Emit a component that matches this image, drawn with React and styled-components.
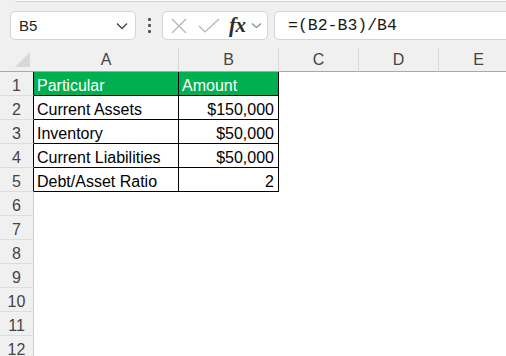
import React from 'react'
import styled, { createGlobalStyle } from 'styled-components';

const GlobalStyle = createGlobalStyle`
    html, body {
        margin: 0;
        padding: 0;
        background: #f0f0f0;
    }
    #root {
        width: 506px;
        height: 356px;
        overflow: hidden;
    }
`;

const columns = ["A", "B", "C", "D", "E"];

const rows = [
    ["Particular", "Amount"],
    ["Current Assets", "$150,000"],
    ["Inventory", "$50,000"],
    ["Current Liabilities", "$50,000"],
    ["Debt/Asset Ratio", "2"],
];

export default function App() {
    return (
        <Page>
            <GlobalStyle />
            <RibbonEdge />
            <FormulaBar>
                <NameBox>
                    <span>B5</span>
                    <svg width="12" height="8" viewBox="0 0 12 8">
                        <path d="M1 1.5 L6 6.5 L11 1.5" fill="none" stroke="#444" strokeWidth="1.3" />
                    </svg>
                </NameBox>
                <Dots>
                    <i /><i /><i />
                </Dots>
                <ActionBox>
                    <svg width="16" height="16" viewBox="0 0 16 16">
                        <path d="M1 1 L15 15 M15 1 L1 15" stroke="#b4b4b4" strokeWidth="1.2" />
                    </svg>
                    <svg width="22" height="16" viewBox="0 0 22 16">
                        <path d="M1 8 L7 14 L21 1" fill="none" stroke="#b4b4b4" strokeWidth="1.2" />
                    </svg>
                    <Fx>fx</Fx>
                    <svg width="11" height="7" viewBox="0 0 11 7">
                        <path d="M1 1.5 L5.5 5.5 L10 1.5" fill="none" stroke="#8a8a8a" strokeWidth="1.1" />
                    </svg>
                </ActionBox>
                <FormulaInput>=(B2-B3)/B4</FormulaInput>
            </FormulaBar>

            <Sheet>
                <Corner><Triangle /></Corner>
                {columns.map((c) => (
                    <ColHead key={c}>{c}</ColHead>
                ))}
                {Array.from({ length: 12 }, (_, i) => {
                    const data = rows[i];
                    return (
                        <React.Fragment key={i}>
                            <RowHead $dark={!!data}>{i + 1}</RowHead>
                            {columns.map((c, j) => {
                                const value = data && j < 2 ? data[j] : "";
                                const inTable = !!data && j < 2;
                                return (
                                    <Cell
                                        key={c}
                                        $table={inTable}
                                        $head={i === 0 && inTable}
                                        $right={i > 0 && j === 1}
                                    >
                                        {value}
                                    </Cell>
                                );
                            })}
                        </React.Fragment>
                    );
                })}
            </Sheet>
        </Page>
    );
}

const Page = styled.div`
    width: 506px;
    height: 356px;
    background: #f0f0f0;
    display: flex;
    flex-direction: column;
    font-family: "Liberation Sans", Arial, sans-serif;
    overflow: hidden;
`;

const RibbonEdge = styled.div`
    flex-shrink: 0;
    height: 1px;
    margin-left: 14px;
    background: #fff;
    border-bottom: 1px solid #d2d2d2;
    border-bottom-left-radius: 4px;
`;

const FormulaBar = styled.div`
    flex-shrink: 0;
    height: 46px;
    display: flex;
    align-items: flex-start;
    padding: 9px 0 0 10px;
    box-sizing: border-box;
`;

const Box = styled.div`
    height: 29px;
    box-sizing: border-box;
    background: #fff;
    border: 1px solid #d4d4d4;
    border-radius: 5px;
    display: flex;
    align-items: center;
`;

const NameBox = styled(Box)`
    width: 126px;
    padding: 0 7px 0 8px;
    justify-content: space-between;
    font-size: 15px;
    color: #222;
`;

const Dots = styled.div`
    width: 26px;
    height: 29px;
    display: flex;
    flex-direction: column;
    align-items: center;
    justify-content: center;
    gap: 3px;
    i {
        width: 3px;
        height: 3px;
        background: #555;
        border-radius: 1px;
    }
`;

const ActionBox = styled(Box)`
    width: 106px;
    padding: 0 3px 0 8px;
    gap: 5px;
    svg:nth-child(2) {
        margin-left: 6px;
    }
`;

const Fx = styled.span`
    font-family: "Liberation Serif", "Times New Roman", serif;
    font-style: italic;
    font-weight: bold;
    font-size: 21px;
    color: #2b2b2b;
    margin-left: 4px;
    letter-spacing: -0.5px;
`;

const FormulaInput = styled(Box)`
    flex: 1;
    margin-left: 6px;
    margin-right: -10px;
    padding-left: 13px;
    font-family: "Liberation Mono", "DejaVu Sans Mono", monospace;
    font-size: 16.5px;
    color: #1a1a1a;
`;

const Sheet = styled.div`
    flex-shrink: 0;
    display: grid;
    grid-template-columns: 34px 145px 100px 80px 80px 80px;
    grid-auto-rows: 24px;
    background: #fff;
    font-size: 16px;
`;

const Corner = styled.div`
    background: #f0f0f0;
    border-bottom: 1px solid #a8a8a8;
    display: flex;
    align-items: flex-end;
    justify-content: flex-end;
    padding: 0 4px 4px 0;
`;

const Triangle = styled.div`
    width: 15px;
    height: 15px;
    background: #d8d8d8;
    clip-path: polygon(100% 0, 100% 100%, 0 100%);
`;

const ColHead = styled.div`
    background: #f0f0f0;
    border-bottom: 1px solid #a8a8a8;
    border-right: 1px solid #d8d8d8;
    display: flex;
    align-items: flex-end;
    justify-content: center;
    padding-bottom: 2px;
    box-sizing: border-box;
    font-size: 16px;
    color: #444;
`;

const RowHead = styled.div`
    background: #f0f0f0;
    border-right: 1px solid ${({ $dark }) => ($dark ? "#000" : "#cfcfcf")};
    border-bottom: 1px solid #dcdcdc;
    display: flex;
    align-items: flex-end;
    justify-content: center;
    box-sizing: border-box;
    font-size: 16px;
    color: #444;
`;

const Cell = styled.div`
    box-sizing: border-box;
    display: flex;
    align-items: flex-end;
    justify-content: ${({ $right }) => ($right ? "flex-end" : "flex-start")};
    padding: 0 4px 0 3px;
    white-space: nowrap;
    color: ${({ $head }) => ($head ? "#fff" : "#000")};
    background: ${({ $head }) => ($head ? "#00b050" : "#fff")};
    border-right: 1px solid ${({ $table }) => ($table ? "#000" : "transparent")};
    border-bottom: 1px solid ${({ $table }) => ($table ? "#000" : "transparent")};
`;
